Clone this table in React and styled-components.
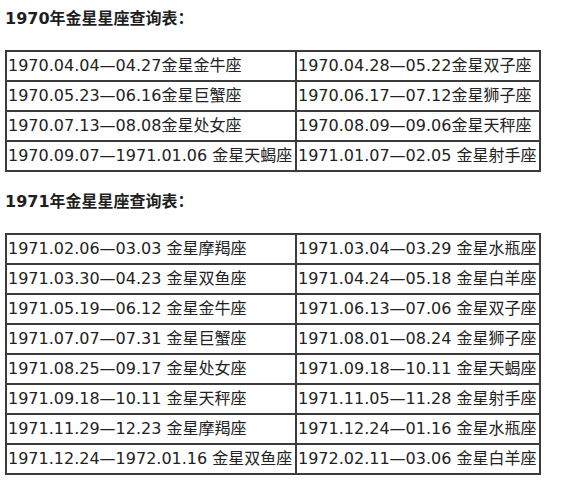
import styled, { createGlobalStyle } from "styled-components";

const GlobalStyle = createGlobalStyle`
  body {
    margin: 0;
    background: #fff;
    font-family: "DejaVu Sans", "Noto Sans CJK SC", sans-serif;
    color: #222;
  }
`;

const Page = styled.div`
  padding: 7px 5px 0;
`;

const Heading = styled.p`
  margin: 0 0 19px;
  font-size: 16px;
  line-height: 24px;
  font-weight: bold;
  color: #1e1e1e;
`;

const Table = styled.table`
  border-collapse: separate;
  border-spacing: 0;
  border: 1px solid #3c3c3c;
  width: 536px;
  table-layout: fixed;
  margin-bottom: 18px;
`;

const Cell = styled.td`
  border: 1px solid #3c3c3c;
  padding: 0 1px;
  height: 28px;
  line-height: 28px;
  font-size: 16px;
  color: #222;
  white-space: nowrap;
  overflow: hidden;
  width: ${(p) => p.$w}px;
  box-sizing: border-box;
`;

const data1970 = [
  ["1970.04.04—04.27金星金牛座", "1970.04.28—05.22金星双子座"],
  ["1970.05.23—06.16金星巨蟹座", "1970.06.17—07.12金星狮子座"],
  ["1970.07.13—08.08金星处女座", "1970.08.09—09.06金星天秤座"],
  ["1970.09.07—1971.01.06 金星天蝎座", "1971.01.07—02.05 金星射手座"],
];

const data1971 = [
  ["1971.02.06—03.03 金星摩羯座", "1971.03.04—03.29 金星水瓶座"],
  ["1971.03.30—04.23 金星双鱼座", "1971.04.24—05.18 金星白羊座"],
  ["1971.05.19—06.12 金星金牛座", "1971.06.13—07.06 金星双子座"],
  ["1971.07.07—07.31 金星巨蟹座", "1971.08.01—08.24 金星狮子座"],
  ["1971.08.25—09.17 金星处女座", "1971.09.18—10.11 金星天蝎座"],
  ["1971.09.18—10.11 金星天秤座", "1971.11.05—11.28 金星射手座"],
  ["1971.11.29—12.23 金星摩羯座", "1971.12.24—01.16 金星水瓶座"],
  ["1971.12.24—1972.01.16 金星双鱼座", "1972.02.11—03.06 金星白羊座"],
];

function VenusTable({ rows }) {
  return (
    <Table>
      <tbody>
        {rows.map((r, i) => (
          <tr key={i}>
            <Cell $w={290}>{r[0]}</Cell>
            <Cell $w={244}>{r[1]}</Cell>
          </tr>
        ))}
      </tbody>
    </Table>
  );
}

export default function App() {
  return (
    <Page>
      <GlobalStyle />
      <Heading>1970年金星星座查询表：</Heading>
      <VenusTable rows={data1970} />
      <Heading>1971年金星星座查询表：</Heading>
      <VenusTable rows={data1971} />
    </Page>
  );
}
